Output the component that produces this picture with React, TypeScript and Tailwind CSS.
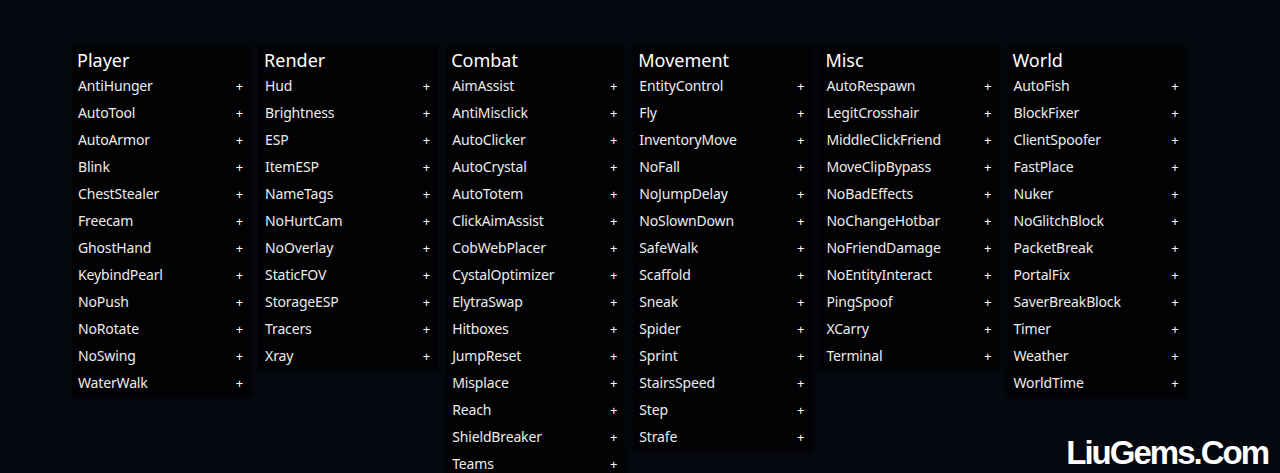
import React from "react";

const panels: { title: string; items: string[] }[] = [
  {
    title: "Player",
    items: ["AntiHunger", "AutoTool", "AutoArmor", "Blink", "ChestStealer", "Freecam", "GhostHand", "KeybindPearl", "NoPush", "NoRotate", "NoSwing", "WaterWalk"],
  },
  {
    title: "Render",
    items: ["Hud", "Brightness", "ESP", "ItemESP", "NameTags", "NoHurtCam", "NoOverlay", "StaticFOV", "StorageESP", "Tracers", "Xray"],
  },
  {
    title: "Combat",
    items: ["AimAssist", "AntiMisclick", "AutoClicker", "AutoCrystal", "AutoTotem", "ClickAimAssist", "CobWebPlacer", "CystalOptimizer", "ElytraSwap", "Hitboxes", "JumpReset", "Misplace", "Reach", "ShieldBreaker", "Teams"],
  },
  {
    title: "Movement",
    items: ["EntityControl", "Fly", "InventoryMove", "NoFall", "NoJumpDelay", "NoSlownDown", "SafeWalk", "Scaffold", "Sneak", "Spider", "Sprint", "StairsSpeed", "Step", "Strafe"],
  },
  {
    title: "Misc",
    items: ["AutoRespawn", "LegitCrosshair", "MiddleClickFriend", "MoveClipBypass", "NoBadEffects", "NoChangeHotbar", "NoFriendDamage", "NoEntityInteract", "PingSpoof", "XCarry", "Terminal"],
  },
  {
    title: "World",
    items: ["AutoFish", "BlockFixer", "ClientSpoofer", "FastPlace", "Nuker", "NoGlitchBlock", "PacketBreak", "PortalFix", "SaverBreakBlock", "Timer", "Weather", "WorldTime"],
  },
];

export default function App() {
  return (
    <div
      className="relative w-[1280px] h-[473px] overflow-hidden bg-[#05080f]"
      style={{ fontFamily: '"Noto Sans", "Open Sans", sans-serif' }}
    >
      <div className="flex items-start gap-[8.1px] pl-[72px] pt-[46px]">
        {panels.map((p) => (
          <div
            key={p.title}
            className="w-[179px] shrink-0 rounded-[4px] bg-[#020204] shadow-[0_0_4px_rgba(0,0,0,0.6)]"
          >
            <div className="h-[27px] pl-[5px] flex items-center text-[18px] leading-none text-white">
              {p.title}
            </div>
            {p.items.map((it) => (
              <div
                key={it}
                className="h-[27px] pl-[6px] pr-[8px] pb-[1px] flex items-center justify-between text-[14px] tracking-[-0.15px] leading-none text-[#ececec]"
              >
                <span>{it}</span>
                <span className="text-[13px] text-white">+</span>
              </div>
            ))}
          </div>
        ))}
      </div>
      <div
        className="absolute right-[12px] bottom-[4px] text-[33px] font-bold text-white tracking-[-2px] leading-none"
        style={{ fontFamily: '"Liberation Sans", Arial, sans-serif' }}
      >
        LiuGems.Com
      </div>
    </div>
  );
}
